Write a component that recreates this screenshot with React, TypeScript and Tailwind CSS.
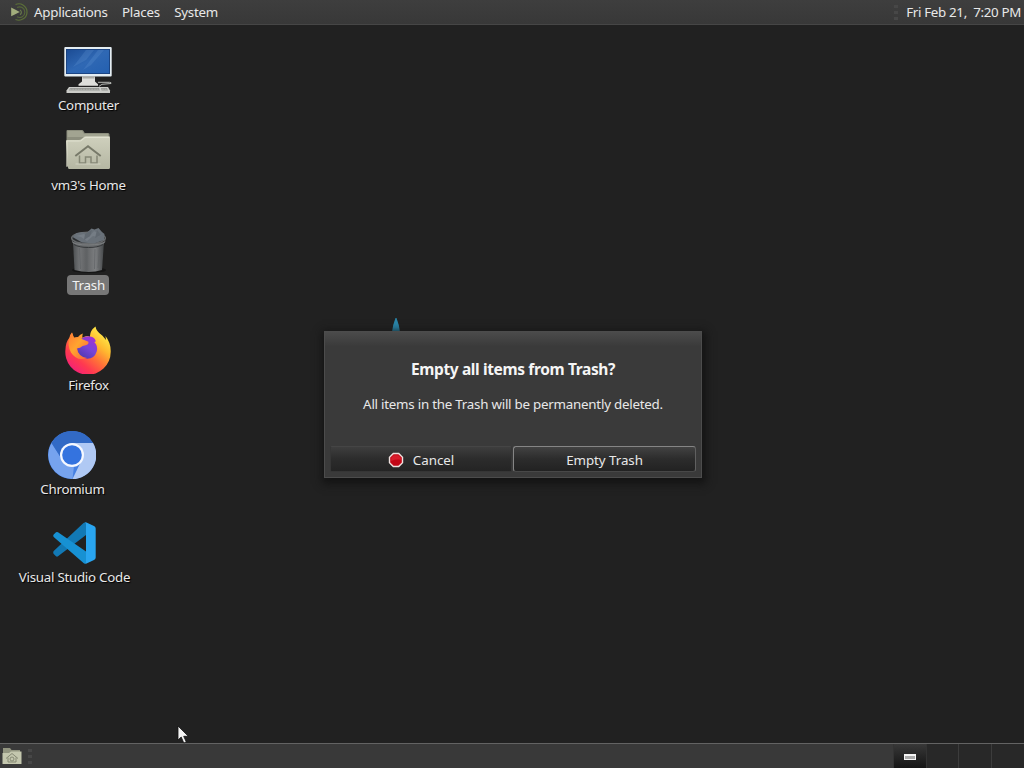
import type { ReactNode } from "react";

function MateLogo() {
  return (
    <svg className="h-[18px] w-[19px] shrink-0" viewBox="0 0 19 18" fill="none">
      <path d="M5.5 1.5A8.2 8.2 0 1 1 5.5 16.5" stroke="#5c7038" strokeWidth="1.2" />
      <path d="M7 4.5A5.3 5.3 0 1 1 7 13.8" stroke="#55663a" strokeWidth="1.2" />
      <path d="M10 7A2.6 2.6 0 0 1 10 11.6" stroke="#66784a" strokeWidth="1.2" />
      <path d="M1.2 4.6 9.8 9 1.2 13.2Z" fill="#a2ad7c" />
    </svg>
  );
}

function ComputerIcon() {
  return (
    <svg className="size-12" viewBox="0 0 48 48">
      <defs>
        <linearGradient id="screen" x1="0" y1="0" x2="1" y2="1">
          <stop offset="0" stopColor="#1c4c94" />
          <stop offset=".5" stopColor="#2f68b4" />
          <stop offset="1" stopColor="#2460b0" />
        </linearGradient>
      </defs>
      <rect x=".3" y="1" width="47.4" height="29.6" rx="1" fill="#e4edf2" />
      <rect x="2" y="3" width="44" height="25" fill="#173d78" />
      <rect x="2.8" y="3.8" width="42.4" height="23.4" fill="url(#screen)" />
      <path d="M22 4h8l-8 10-13 7zM34 4h6L27 19l-8 5z" fill="#6fa0dc" opacity=".22" />
      <path d="M18 30.600h13v5l3 2.600v1.600H14.500v-1.600l3.500-2.600z" fill="#dededa" />
      <path d="M18.500 31h12v1.500h-12z" fill="#a9aaa5" />
      <path d="M34 36.300h11.500q2 0 1.500 1.200l-9 .8-3 2" stroke="#b8bab6" strokeWidth="1" fill="none" />
      <path d="M5 41h39l2 3.500v2.500H2.500v-2.500z" fill="#cbccc8" />
      <path d="M6 42h29l1 2.6H4.800zM37 42h6l1 2.600h-6.400z" fill="#969894" />
      <path d="M5.500 43.300h38" stroke="#cacbc6" strokeWidth=".5" strokeDasharray="2 .7" />
    </svg>
  );
}

function HomeIcon() {
  return (
    <svg className="size-12" viewBox="0 0 48 48">
      <defs>
        <linearGradient id="folder" x1="0" y1="0" x2="0" y2="1">
          <stop offset="0" stopColor="#cfd0bd" />
          <stop offset="1" stopColor="#b5b7a3" />
        </linearGradient>
      </defs>
      <path d="M2.500 40V5q0-1 1-1H18q1 0 1.500 1l1.200 2H44q1.500 0 1.500 1.500V42z" fill="#8d8f7e" />
      <path d="M3.500 5h14.500l2 3h24v3H3.500z" fill="#a2a491" />
      <path d="M2 15q0-1 1-1h12q1.500 0 2.500-1l2.800-2.200q.7-.5 1.700-.5h22.800q1.200 0 1.200 1.200v30q0 1.500-1.500 1.500h-39q-1.500 0-1.500-1.500z" fill="url(#folder)" />
      <path d="M3 41V15h12.500q1.500 0 2.500-1l3-2.500h24" stroke="#e2e3d2" strokeWidth=".9" fill="none" />
      <path d="M11.300 30 24 20.300 36.700 30" stroke="#777969" strokeWidth="2" fill="none" />
      <path d="M15.500 29.500v7.500h6v-6h5.500v6h6v-7.500" stroke="#858775" strokeWidth="1.500" fill="none" />
      <path d="M11.500 38h25" stroke="#d7d8c8" strokeWidth=".8" />
    </svg>
  );
}

function TrashIcon() {
  return (
    <svg className="ml-[1px] size-12" viewBox="0 0 48 48">
      <defs>
        <linearGradient id="can">
          <stop offset="0" stopColor="#4c4f51" />
          <stop offset=".22" stopColor="#727476" />
          <stop offset=".42" stopColor="#606264" />
          <stop offset=".72" stopColor="#7d7f81" />
          <stop offset="1" stopColor="#45484a" />
        </linearGradient>
      </defs>
      <ellipse cx="24" cy="44" rx="17" ry="3" fill="#151515" />
      <path d="M8 16h31l-2 28q-13 4-27.500 0z" fill="url(#can)" />
      <ellipse cx="23.500" cy="12" rx="16.800" ry="5.800" fill="#2c2f31" stroke="#686b6d" strokeWidth="1.500" />
      <path d="m7.500 11 4-4 6-1 4 1 5-4.500 3 1 4-1.500 3.500 4 2.500 2-.5 6-10 3.500-12-1z" fill="#697179" />
      <path d="m11 10 8-2 5 3 5-6 8 4-5 2-4-1-6 5-6-4z" fill="#757d85" />
      <path d="m20 8 7-4-2 6-6 4zm12-4 4 5-6 3z" fill="#606870" />
      <path d="M6.700 13q0 5.500 16.800 5.500T40.300 13v3Q38 20.700 23.500 20.700T7 16z" fill="#646769" />
      <path d="M7.500 16q3 3 16 3t16.200-3" stroke="#808385" strokeWidth=".8" fill="none" />
      <path d="M9 18.500q5 3 14.500 3T38 18.500" stroke="#35383a" fill="none" />
      <path d="m14.500 22 1 21M22 23v21m8-21-.5 20m5-21-1.500 20" stroke="#5f6264" strokeWidth=".7" />
    </svg>
  );
}

function FirefoxIcon() {
  return (
    <svg className="size-12" viewBox="0 0 48 48">
      <defs>
        <linearGradient id="fire" x1=".85" y1=".08" x2=".2" y2=".9">
          <stop offset="0" stopColor="#fff14a" />
          <stop offset=".3" stopColor="#ffb92f" />
          <stop offset=".56" stopColor="#ff7138" />
          <stop offset=".8" stopColor="#ff3950" />
          <stop offset="1" stopColor="#f52473" />
        </linearGradient>
        <linearGradient id="globe" x1=".8" y1="0" x2=".2" y2="1">
          <stop offset="0" stopColor="#a52fd3" />
          <stop offset=".5" stopColor="#7744d8" />
          <stop offset="1" stopColor="#4d38ac" />
        </linearGradient>
        <linearGradient id="flame" x1="0" y1="0" x2="1" y2="1">
          <stop offset="0" stopColor="#ff7a35" />
          <stop offset=".45" stopColor="#ffa52f" />
          <stop offset="1" stopColor="#ff5a3c" />
        </linearGradient>
      </defs>
      <path d="M5.500 11.500Q6 8.200 8 6.500l1.800 5.200L14 11q2-2.600 5-3.500-1 2-.5 4.300Q23 8.700 26 11q-.5-6 5.500-10.500Q32 5.300 38.500 9.700L42 14l-.5-4q5.500 7 5.200 16A22.700 22.700 0 1 1 1.500 23Q1.800 16 5.500 11.500z" fill="url(#fire)" />
      <path d="M17 13q4-3.500 9-2.500 5 .7 5.800 5l-1.500.6q4 4 2.400 9.500-2.300 7.200-9.300 7.200-9.500-.5-10.200-9 0-4.500 3.800-6.800z" fill="url(#globe)" />
      <path d="M5.500 12 8 6.500l2 5.200q5-1.500 8.400 1.500l6 2.600q1.200 3.200-5.800 4.300-3 2.600-5.800 2.200 1.500 8.700 10.200 9.600-10 4-16-5.400Q3 19 5.500 12z" fill="url(#flame)" />
    </svg>
  );
}

function ChromiumIcon() {
  return (
    <svg className="size-12" viewBox="0 0 48 48">
      <circle cx="24" cy="24" r="24" fill="#4680e2" />
      <path d="M24 12h21.100A24 24 0 0 1 24.500 48l9-18.500z" fill="#b0c9f4" />
      <path d="M3.500 12 14.500 29.500q4 6.500 11.500 5.500L24.500 48A24 24 0 0 1 3.500 12z" fill="#76a3ee" />
      <path d="M3.500 12A24 24 0 0 1 45.100 12H24a12 12 0 0 0-10.500 15.500z" fill="#326ac5" />
      <circle cx="24" cy="24" r="12" fill="#f5f8ff" />
      <circle cx="24" cy="24" r="9.800" fill="#3473df" />
    </svg>
  );
}

function CodeIcon() {
  return (
    <svg className="h-[42px] w-[43px]" viewBox="0 0 43 42">
      <path d="M.7 29 30.500 1Q31.500 0 33 .7V13L5 34.300q-1 .7-2 0L.7 32q-1-1.500 0-3z" fill="#1279b5" />
      <path d="M.7 12.500 3 10.300q1-.8 2 0L33 29.500v11.800q-1.500.7-2.500-.3L.7 15q-1-1.200 0-2.500z" fill="#1791d3" />
      <path d="M31 .8q1-1 2.500-.4L41 4q1.700.8 1.700 2.500v29Q42.700 37.200 41 38l-7.500 3.600q-1.500.7-2.500-.4 2 1.200 2-1.500V2.200Q33 0 31 .8z" fill="#29a5f0" />
    </svg>
  );
}

function StopIcon() {
  return (
    <svg className="mb-[2px] size-4" viewBox="0 0 16 16">
      <path d="M5 .8h6L15.200 5v6L11 15.200H5L.8 11V5z" fill="#eee0de" />
      <path d="M5.600 2.200h4.800L13.800 5.600v4.800L10.400 13.800H5.600L2.200 10.400V5.600z" fill="#c20616" />
      <path d="M5.800 3.200h4.400L12.800 5.800v2Q8 7 3.200 9V5.800z" fill="#d81c2b" />
    </svg>
  );
}

function DesktopItem({ place, label, labelGap = "mt-px", selected = false, children }: { place: string; label: string; labelGap?: string; selected?: boolean; children: ReactNode }) {
  return (
    <div className={`absolute flex w-[130px] -translate-x-1/2 flex-col items-center ${place}`}>
      {children}
      <span className={`h-5 rounded-[4px] leading-5 tracking-[-0.27px] whitespace-nowrap ${labelGap} ${selected ? "bg-[#777777] pr-[4px] pl-[5px] text-[#f2f2f2]" : "ml-[1px] [text-shadow:1px_1px_1px_#000]"}`}>{label}</span>
    </div>
  );
}

function Grip() {
  return (
    <span className="flex w-1 flex-col gap-[3px]">
      <i className="h-[3px] bg-[#474747]" />
      <i className="h-[3px] bg-[#474747]" />
      <i className="h-[3px] bg-[#474747]" />
    </span>
  );
}

export default function App() {
  return (
    <div className="relative flex h-[768px] w-[1024px] flex-col overflow-hidden bg-[#212121] font-['Noto_Sans','Open_Sans',sans-serif] text-[13.33px] text-[#e8e8e8] select-none">
      <header className="flex h-[25px] shrink-0 items-center border-b border-[#464646] bg-linear-to-b from-[#3e3e3e] to-[#383838] pl-[10px] pr-[3px] leading-6 tracking-[-0.24px]">
        <MateLogo />
        <nav className="ml-[5px] flex gap-[14.3px]">
          <span>Applications</span>
          <span>Places</span>
          <span>System</span>
        </nav>
        <div className="ml-auto flex items-center gap-[8px]">
          <Grip />
          <time className="tracking-[-0.32px] whitespace-pre">Fri Feb 21,  7:20 PM</time>
        </div>
      </header>

      <main className="relative flex-1">
        <DesktopItem place="left-[88px] top-[21px]" label="Computer"><ComputerIcon /></DesktopItem>
        <DesktopItem place="left-[88px] top-[101px]" label="vm3's Home"><HomeIcon /></DesktopItem>
        <DesktopItem place="left-[88px] top-[201px]" label="Trash" selected><TrashIcon /></DesktopItem>
        <DesktopItem place="left-[88px] top-[301px]" label="Firefox"><FirefoxIcon /></DesktopItem>
        <DesktopItem place="left-[72px] top-[406px]" label="Chromium" labelGap="mt-0"><ChromiumIcon /></DesktopItem>
        <DesktopItem place="left-[74px] top-[497px]" label="Visual Studio Code" labelGap="mt-[3px]"><CodeIcon /></DesktopItem>

        <svg className="absolute left-[391px] top-[293px] h-[14px] w-[10px]" viewBox="0 0 10 14">
          <path d="M4.500 0h1Q8 6 9 14H1Q2 6 4.500 0z" fill="#2a86aa" />
        </svg>

        <section role="dialog" className="absolute left-[324px] top-[306px] flex h-[147px] w-[378px] flex-col border border-[#4c4c4c] bg-[#3a3a3a] bg-linear-to-b from-[#4b4b4b] via-[#3a3a3a] via-10% to-[#3a3a3a] px-[5px] pb-[5px] text-center shadow-[1px_3px_8px_3px_#141414]">
          <h1 className="mt-[25px] text-[15.5px] leading-6 font-bold tracking-[-0.37px] text-[#f5f5f5]">Empty all items from Trash?</h1>
          <p className="mt-[11px] leading-6 tracking-[-0.23px]">All items in the Trash will be permanently deleted.</p>
          <div className="mt-auto grid h-[26px] grid-cols-2">
            <button className="mr-[1px] flex items-center justify-center gap-[9px] rounded-[2px] border border-[#363636] border-t-[#454545] bg-linear-to-b from-[#3e3e3e] via-[#2c2c2c] to-[#242424] pt-[3px]">
              <StopIcon />Cancel
            </button>
            <button className="rounded-[3px] border border-[#606060] border-t-[#858585] border-l-[#858585] border-b-[#484848] bg-linear-to-b from-[#424242] via-[#2c2c2c] to-[#222222] pt-[3px] tracking-[-0.05px]">Empty Trash</button>
          </div>
        </section>

        <svg className="absolute left-[177px] top-[700px] h-[20px] w-[13px]" viewBox="0 0 13 20">
          <path d="M1 1v14l3.200-3 2.600 6 2.500-1-2.600-5.700h4.600z" fill="#f4f4f4" stroke="#111" strokeWidth=".8" />
        </svg>
      </main>

      <footer className="flex h-[25px] shrink-0 items-center border-t border-[#636363] bg-[#393939]">
        <svg className="ml-[2px] size-5" viewBox="0 0 20 20">
          <path d="M1 3V2h7l1.500 2H18v4H1z" fill="#929580" />
          <path d="M.5 7H7l2-1.500h10.500V18h-19z" fill="#c4c7ae" />
          <path d="m4 12.500 6-5 6 5M6 11.500V16h8v-4.500" fill="none" stroke="#858873" />
          <circle cx="10" cy="13" r="2" fill="none" stroke="#858873" />
        </svg>
        <span className="ml-[6px]"><Grip /></span>
        <div className="ml-auto flex h-full w-[131px] border-l border-[#333]">
          <div className="flex w-[33px] items-center justify-center border-r border-[#333] bg-linear-to-b from-[#383838] to-[#151515] pt-[2px] pr-[1px]">
            <span className="h-[6px] w-[12px] border border-[#f5f5f5] border-t-2 bg-[#aaa]" />
          </div>
          <div className="w-[32px] border-r border-[#3c3c3c] bg-[#282828]" />
          <div className="w-[33px] border-r border-[#3c3c3c] bg-[#282828]" />
          <div className="w-[32px] bg-[#282828]" />
        </div>
      </footer>
    </div>
  );
}
